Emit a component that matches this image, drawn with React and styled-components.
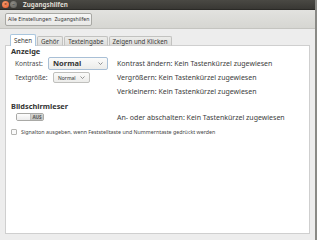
import React from "react";
import styled, { createGlobalStyle } from "styled-components";

const GlobalStyle = createGlobalStyle`
  html, body { margin: 0; padding: 0; }
  body {
    width: 317px;
    height: 240px;
    overflow: hidden;
    font-family: "Noto Sans", "DejaVu Sans", sans-serif;
    color: #3c3c3c;
    background: #ededed;
  }
`;

const Window = styled.div`
  width: 317px;
  height: 240px;
  display: flex;
  flex-direction: column;
  background: #ededed;
  border-right: 2px solid #8a8a86;
  box-sizing: border-box;
`;

const TitleBar = styled.div`
  height: 9px;
  display: flex;
  align-items: center;
  gap: 1px;
  padding-left: 2px;
  background: linear-gradient(#4a4944, #393834);
  border-bottom: 1px solid #2b2a27;
`;

const WinButton = styled.span`
  width: 7px;
  height: 7px;
  border-radius: 50%;
  background: ${p => (p.close ? "radial-gradient(circle at 40% 35%, #f7a070, #e5552a)" : "radial-gradient(circle at 40% 35%, #8d8c86, #5d5c57)")};
  display: flex;
  align-items: center;
  justify-content: center;
  font-size: 5px;
  line-height: 1;
  color: ${p => (p.close ? "#5a2010" : "#2d2c29")};
`;

const Title = styled.span`
  margin-left: 5px;
  font-size: 6.3px;
  font-weight: bold;
  color: #dfdbd2;
`;

const Toolbar = styled.div`
  height: 18px;
  display: flex;
  align-items: center;
  padding-left: 5px;
  background: linear-gradient(#e2e2df, #d6d6d2);
  border-bottom: 1px solid #c4c4c0;
`;

const Crumb = styled.div`
  display: flex;
  align-items: center;
  gap: 3px;
  height: 11px;
  padding: 0 2px;
  border: 1px solid #a8a8a4;
  border-radius: 2px;
  background: linear-gradient(#f6f6f5, #e8e8e6);
  font-size: 5.2px;
  color: #333;
`;

const Body = styled.div`
  flex: 1;
  display: flex;
  flex-direction: column;
  padding: 5px 5px 6px 5px;
`;

const Tabs = styled.div`
  display: flex;
  padding-left: 5px;
  gap: 1px;
  position: relative;
  z-index: 1;
  margin-bottom: -1px;
`;

const Tab = styled.div`
  height: ${p => (p.active ? "12px" : "10px")};
  margin-top: ${p => (p.active ? "0" : "2px")};
  padding: 0 3px;
  display: flex;
  align-items: center;
  font-size: 6.2px;
  color: #3c3c3c;
  box-sizing: border-box;
  border: 1px solid ${p => (p.active ? "#a9c6de" : "#c2c2c0")};
  border-bottom: ${p => (p.active ? "none" : "1px solid #cfcfcf")};
  border-radius: 2px 2px 0 0;
  background: ${p => (p.active ? "#ffffff" : "linear-gradient(#ececea, #dededc)")};
`;

const Page = styled.div`
  flex: 1;
  background: #fff;
  border: 1px solid #cfcfcf;
  padding: 1px 5px;
  display: flex;
  flex-direction: column;
`;

const Heading = styled.div`
  font-size: 7.4px;
  font-weight: bold;
  color: #333;
  line-height: ${p => p.lh || 9}px;
  margin-top: ${p => p.mt || 0}px;
`;

const Grid = styled.div`
  display: grid;
  grid-template-columns: 102px 1fr;
  padding-left: 4px;
  align-items: center;
`;

const Row = styled.div`
  display: flex;
  align-items: center;
  height: ${p => p.h || 14}px;
`;

const Label = styled.span`
  font-size: 6.5px;
  color: #4a4a4a;
  width: ${p => p.w}px;
  flex: none;
`;

const Shortcut = styled.div`
  font-size: 7px;
  color: #3c3c3c;
  height: ${p => p.h || 14}px;
  display: flex;
  align-items: center;
  white-space: nowrap;
`;

const Combo = styled.div`
  display: flex;
  align-items: center;
  justify-content: space-between;
  box-sizing: border-box;
  width: ${p => p.w}px;
  height: ${p => p.hh}px;
  padding: 0 4px 0 4px;
  border: 1px solid ${p => (p.focus ? "#a8bfd6" : "#c0c0bd")};
  border-radius: 2px;
  background: linear-gradient(#fbfbfa, #ececea);
  font-size: ${p => p.fs}px;
  font-weight: ${p => (p.bold ? "bold" : "normal")};
  color: #333;
`;

const Chevron = () => (
  <svg width="5" height="3" viewBox="0 0 5 3">
    <path d="M0.5 0.5 L2.5 2.5 L4.5 0.5" fill="none" stroke="#777" strokeWidth="0.8" />
  </svg>
);

const Switch = styled.div`
  display: flex;
  width: 28px;
  height: 8px;
  box-sizing: border-box;
  border: 1px solid #a9a9a6;
  border-radius: 2px;
  overflow: hidden;
  margin-left: 1px;
`;

const Knob = styled.span`
  width: 13px;
  background: linear-gradient(#fdfdfd, #ececec);
  border-right: 1px solid #bdbdbb;
`;

const SwitchText = styled.span`
  flex: 1;
  display: flex;
  align-items: center;
  justify-content: center;
  font-size: 4.6px;
  font-weight: bold;
  color: #555;
  background: linear-gradient(#d3d3d0, #c2c2bf);
`;

const CheckRow = styled.label`
  display: flex;
  align-items: center;
  gap: 4px;
  margin-top: 5px;
  line-height: 8px;
  font-size: 5.3px;
  color: #444;
`;

const Box = styled.span`
  width: 4px;
  height: 4px;
  border: 1px solid #b5b5b2;
  border-radius: 1px;
  background: #fafafa;
`;

export default function App() {
  return (
    <React.Fragment>
      <GlobalStyle />
      <Window>
        <TitleBar>
          <WinButton close>×</WinButton>
          <WinButton>–</WinButton>
          <Title>Zugangshilfen</Title>
        </TitleBar>
        <Toolbar>
          <Crumb>
            <span>Alle Einstellungen</span>
            <span>Zugangshilfen</span>
          </Crumb>
        </Toolbar>
        <Body>
          <Tabs>
            <Tab active>Sehen</Tab>
            <Tab>Gehör</Tab>
            <Tab>Texteingabe</Tab>
            <Tab>Zeigen und Klicken</Tab>
          </Tabs>
          <Page>
            <Heading>Anzeige</Heading>
            <Grid>
              <Row h={14}>
                <Label w={33}>Kontrast:</Label>
                <Combo w={60} hh={13} fs={7.5} bold focus>
                  <span>Normal</span>
                  <Chevron />
                </Combo>
              </Row>
              <Shortcut h={14}>Kontrast ändern: Kein Tastenkürzel zugewiesen</Shortcut>
              <Row h={15}>
                <Label w={38}>Textgröße:</Label>
                <Combo w={37} hh={11} fs={5}>
                  <span>Normal</span>
                  <Chevron />
                </Combo>
              </Row>
              <Shortcut h={15}>Vergrößern: Kein Tastenkürzel zugewiesen</Shortcut>
              <div />
              <Shortcut h={13}>Verkleinern: Kein Tastenkürzel zugewiesen</Shortcut>
            </Grid>
            <Heading lh={10} mt={3}>Bildschirmleser</Heading>
            <Grid>
              <Row h={12}>
                <Switch>
                  <Knob />
                  <SwitchText>AUS</SwitchText>
                </Switch>
              </Row>
              <Shortcut h={12}>An- oder abschalten: Kein Tastenkürzel zugewiesen</Shortcut>
            </Grid>
            <CheckRow>
              <Box />
              <span>Signalton ausgeben, wenn Feststelltaste und Nummerntaste gedrückt werden</span>
            </CheckRow>
          </Page>
        </Body>
      </Window>
    </React.Fragment>
  );
}
